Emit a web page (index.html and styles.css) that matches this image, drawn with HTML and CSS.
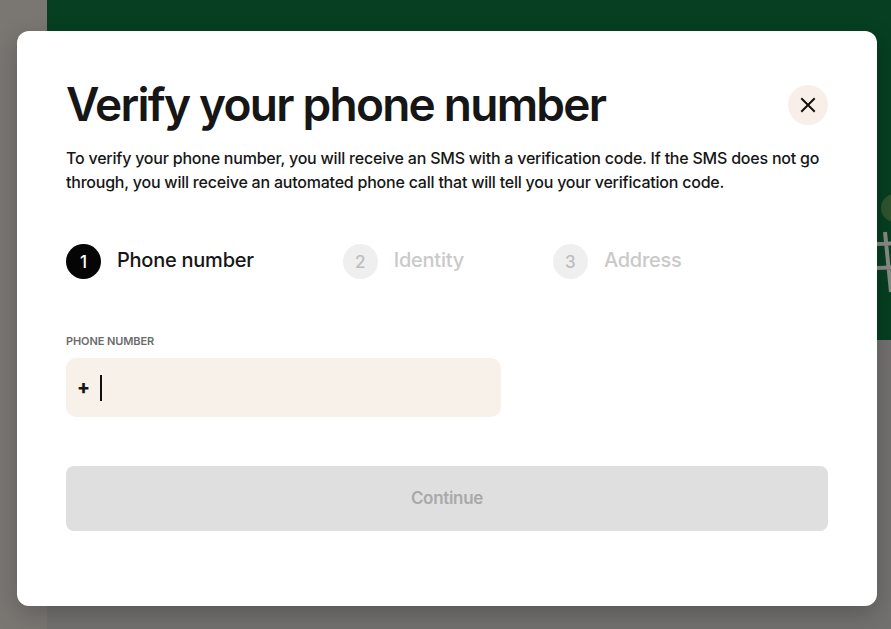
FILE: index.html
```html
<!DOCTYPE html>
<html lang="en">
<head>
<meta charset="utf-8">
<title>Verify your phone number</title>
<link rel="stylesheet" href="styles.css">
</head>
<body>
<div class="page">
  <aside class="side"></aside>
  <main class="main">
    <section class="hero">
      <svg class="hero-art" width="60" height="110" viewBox="0 0 60 110">
        <circle cx="18" cy="16" r="14" fill="#2f5530"/>
        <circle cx="38" cy="22" r="16" fill="#4e3b30"/>
        <path d="M8 40 L14 100 M22 40 L28 100 M36 42 L40 100 M0 52 L60 50 M0 76 L60 74" stroke="#8a8a86" stroke-width="4" fill="none"/>
        <path d="M30 84 L36 98 L42 88 Z" fill="#6a3b32"/>
      </svg>
    </section>
    <section class="lower"></section>
  </main>
</div>

<div class="modal" role="dialog" aria-labelledby="dlg-title">
  <header class="modal-head">
    <h1 id="dlg-title" class="title">Verify your phone number</h1>
    <button class="close" aria-label="Close">
      <svg width="16" height="16" viewBox="0 0 16 16"><path d="M2 2 L14 14 M14 2 L2 14" stroke="#111" stroke-width="2" stroke-linecap="square"/></svg>
    </button>
  </header>
  <p class="intro">To verify your phone number, you will receive an SMS with a verification code. If the SMS does not go through, you will receive an automated phone call that will tell you your verification code.</p>

  <ol class="steps">
    <li class="step active"><span class="num">1</span><span class="step-label">Phone number</span></li>
    <li class="step"><span class="num">2</span><span class="step-label">Identity</span></li>
    <li class="step"><span class="num">3</span><span class="step-label">Address</span></li>
  </ol>

  <label class="field-label" for="phone">PHONE NUMBER</label>
  <div class="field">
    <span class="plus">+</span>
    <span class="caret"></span>
  </div>

  <button class="continue" disabled>Continue</button>
</div>
</body>
</html>
```

FILE: styles.css
```css
* { box-sizing: border-box; }
html, body { margin: 0; padding: 0; }
body {
  font-family: "Inter", "Liberation Sans", sans-serif;
  width: 891px;
  height: 629px;
  overflow: hidden;
  background: #767470;
}
.page {
  display: flex;
  height: 629px;
}
.side {
  width: 47px;
  background: #7a7773;
}
.main {
  flex: 1;
  display: flex;
  flex-direction: column;
}
.hero {
  height: 340px;
  background: #063f21;
  position: relative;
  overflow: hidden;
}
.hero-art {
  position: absolute;
  left: 830px;
  top: 192px;
}
.lower {
  flex: 1;
  background: #727170;
}

.modal {
  position: absolute;
  left: 17px;
  top: 31px;
  width: 860px;
  height: 575px;
  background: #fff;
  border-radius: 12px;
  padding: 47px 49px 0 49px;
  box-shadow: 0 8px 24px rgba(0,0,0,0.22);
  display: flex;
  flex-direction: column;
}
.modal-head {
  display: flex;
  justify-content: space-between;
  align-items: flex-start;
}
.title {
  margin: 0;
  font-size: 46px;
  line-height: 52px;
  font-weight: 600;
  letter-spacing: -1.75px;
  color: #161616;
}
.close {
  margin-top: 7px;
  width: 40px;
  height: 40px;
  border-radius: 50%;
  border: 0;
  background: #f8f0e8;
  display: flex;
  align-items: center;
  justify-content: center;
  padding: 0;
}
.intro {
  margin: 16px 0 0;
  font-size: 16px;
  line-height: 24px;
  font-weight: 500;
  letter-spacing: -0.22px;
  color: #161616;
}
.steps {
  list-style: none;
  margin: 50px 0 0;
  padding: 0;
  display: flex;
  gap: 89px;
}
.step {
  display: flex;
  align-items: center;
  gap: 16px;
}
.num {
  width: 35px;
  height: 35px;
  border-radius: 50%;
  background: #efefef;
  color: #bdbdbd;
  display: flex;
  align-items: center;
  justify-content: center;
  font-size: 17px;
  font-weight: 500;
}
.step-label {
  font-size: 20px;
  font-weight: 500;
  letter-spacing: -0.25px;
  color: #c9c9c9;
  margin-top: -4px;
}
.step.active .num {
  background: #050505;
  color: #fff;
}
.step.active .step-label { color: #161616; }

.field-label {
  margin-top: 55px;
  font-size: 11px;
  line-height: 14px;
  font-weight: 600;
  color: #6b6b6b;
  letter-spacing: -0.1px;
}
.field {
  margin-top: 10px;
  width: 435px;
  height: 59px;
  background: #f8f1ea;
  border-radius: 10px;
  display: flex;
  align-items: center;
  padding-left: 11px;
  gap: 10px;
}
.plus {
  font-size: 19px;
  font-weight: 800;
  color: #161616;
}
.caret {
  width: 1.5px;
  height: 26px;
  background: #111;
}
.continue {
  margin-top: 49px;
  width: 100%;
  height: 65px;
  border: 0;
  border-radius: 8px;
  background: #dfdfdf;
  color: #a9a9a9;
  font-family: inherit;
  font-size: 17px;
  font-weight: 600;
  letter-spacing: -0.3px;
  padding: 0 0 2px;
}
```
